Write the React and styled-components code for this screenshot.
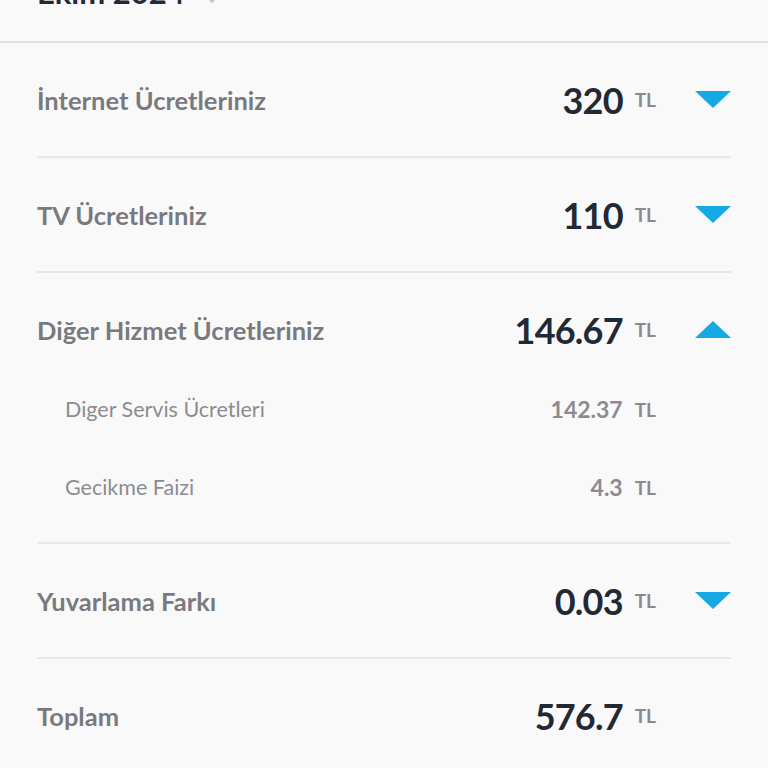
import React from 'react';
import styled, { createGlobalStyle } from 'styled-components';

const GlobalStyle = createGlobalStyle`
  html, body {
    margin: 0;
    padding: 0;
    background: #f9f9fa;
    font-family: Lato, "Open Sans", sans-serif;
  }
`;

const Page = styled.div`
  width: 768px;
  height: 768px;
  overflow: hidden;
  background: #f9f9fa;
`;

const Header = styled.div`
  display: flex;
  align-items: flex-end;
  gap: 22px;
  height: 41px;
  padding: 0 37px;
  border-bottom: 2px solid #e2e2e4;
  overflow: hidden;
`;

const Title = styled.div`
  font-size: 31px;
  font-weight: 700;
  color: #252b36;
  line-height: 1;
  margin-bottom: 33px;
`;

const Chevron = styled.div`
  width: 8px;
  height: 8px;
  border-right: 2px solid #c8c8cc;
  border-bottom: 2px solid #c8c8cc;
  transform: rotate(45deg);
  margin-bottom: 40px;
`;

const List = styled.div`
  padding: 0 37px;
`;

const Section = styled.div`
  border-bottom: 2px solid #e8e8ea;
  padding-bottom: ${(p) => (p.$open ? '16px' : '0')};
`;

const Row = styled.div`
  display: flex;
  align-items: center;
  height: 113px;
`;

const Label = styled.div`
  flex: 1;
  font-size: 25.5px;
  font-weight: 700;
  color: #7a7a7e;
`;

const Amount = styled.div`
  display: flex;
  align-items: center;
  gap: 12px;
`;

const Value = styled.span`
  font-size: 36px;
  font-weight: 700;
  color: #222935;
  letter-spacing: -0.8px;
`;

const Unit = styled.span`
  font-size: 19px;
  font-weight: 700;
  color: #8b8b8f;
`;

const Toggle = styled.div`
  width: 36px;
  margin-left: 39px;
  display: flex;
  justify-content: center;
`;

const Triangle = styled.div`
  width: 0;
  height: 0;
  border-left: 18px solid transparent;
  border-right: 18px solid transparent;
  ${(p) =>
    p.$up
      ? 'border-bottom: 17px solid #14a8e4;'
      : 'border-top: 17px solid #14a8e4;'}
`;

const SubList = styled.div`
  margin-top: -16px;
`;

const SubRow = styled.div`
  display: flex;
  align-items: center;
  height: 78px;
  padding-left: 28px;
`;

const SubLabel = styled.div`
  flex: 1;
  font-size: 21.5px;
  font-weight: 400;
  color: #8c8c90;
`;

const SubValue = styled.span`
  font-size: 23px;
  font-weight: 700;
  color: #8c8c90;
`;

const items = [
  { label: 'İnternet Ücretleriniz', value: '320' },
  { label: 'TV Ücretleriniz', value: '110' },
  {
    label: 'Diğer Hizmet Ücretleriniz',
    value: '146.67',
    open: true,
    subs: [
      { label: 'Diger Servis Ücretleri', value: '142.37' },
      { label: 'Gecikme Faizi', value: '4.3' },
    ],
  },
  { label: 'Yuvarlama Farkı', value: '0.03' },
  { label: 'Toplam', value: '576.7', total: true },
];

const App = () => {
  return (
    <Page>
      <GlobalStyle />
      <Header>
        <Title>Ekim 2024</Title>
        <Chevron />
      </Header>
      <List>
        {items.map((item) => (
          <Section key={item.label} $open={item.open}>
            <Row>
              <Label>{item.label}</Label>
              <Amount>
                <Value>{item.value}</Value>
                <Unit>TL</Unit>
              </Amount>
              <Toggle>{!item.total && <Triangle $up={item.open} />}</Toggle>
            </Row>
            {item.subs && (
              <SubList>
                {item.subs.map((s) => (
                  <SubRow key={s.label}>
                    <SubLabel>{s.label}</SubLabel>
                    <Amount>
                      <SubValue>{s.value}</SubValue>
                      <Unit>TL</Unit>
                    </Amount>
                    <Toggle />
                  </SubRow>
                ))}
              </SubList>
            )}
          </Section>
        ))}
      </List>
    </Page>
  );
};

export default App;
